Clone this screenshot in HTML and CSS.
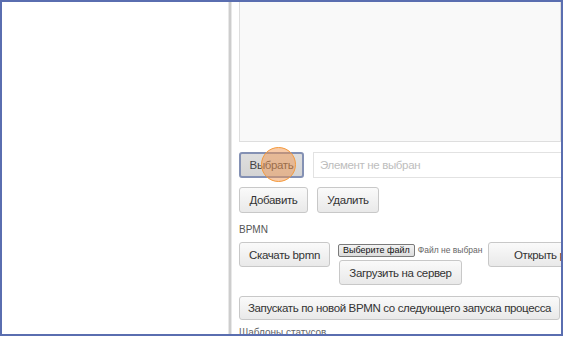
FILE: index.html
```html
<!DOCTYPE html>
<html lang="ru">
<head>
<meta charset="utf-8">
<link rel="stylesheet" href="styles.css">
</head>
<body>
<div class="frame">
  <div class="sidebar"></div>
  <div class="divider"></div>
  <div class="content">
    <div class="textarea"></div>
    <div class="row row-select">
      <button class="btn btn-active">Выбрать</button>
      <div class="field">Элемент не выбран</div>
    </div>
    <div class="row row-add">
      <button class="btn btn-add">Добавить</button>
      <button class="btn btn-del">Удалить</button>
    </div>
    <div class="label">BPMN</div>
    <div class="row row-bpmn">
      <button class="btn btn-download">Скачать bpmn</button>
      <div class="upload">
        <div class="file-line">
          <span class="file-btn">Выберите файл</span>
          <span class="file-name">Файл не выбран</span>
        </div>
        <button class="btn btn-upload">Загрузить на сервер</button>
      </div>
      <button class="btn btn-open">Открыть редактор</button>
    </div>
    <div class="row row-run">
      <button class="btn btn-run">Запускать по новой BPMN со следующего запуска процесса</button>
    </div>
    <div class="label label-cut">Шаблоны статусов</div>
  </div>
  <div class="click-marker"></div>
</div>
</body>
</html>
```

FILE: styles.css
```css
html, body {
  margin: 0;
  padding: 0;
  background: #ffffff;
}
body {
  width: 564px;
  height: 337px;
  overflow: hidden;
  font-family: "Liberation Sans", Arial, sans-serif;
}
.frame {
  position: relative;
  box-sizing: border-box;
  width: 563px;
  height: 336px;
  border: 2px solid #5a6eb0;
  display: flex;
  overflow: hidden;
  background: #fff;
}
.sidebar {
  width: 226px;
  flex: none;
  background: #fff;
}
.divider {
  box-sizing: border-box;
  width: 4px;
  flex: none;
  background: #cdcdcd;
  border-left: 1px solid #e8e8e8;
  border-right: 1px solid #e8e8e8;
}
.content {
  flex: 1;
  padding-left: 7px;
  min-width: 0;
  overflow: hidden;
  display: flex;
  flex-direction: column;
  align-items: flex-start;
}
.textarea {
  box-sizing: border-box;
  width: 322px;
  height: 140px;
  flex: none;
  background: #f9f9f9;
  border: 1px solid #dedede;
  border-top: none;
}
.row {
  display: flex;
  flex: none;
  align-items: flex-start;
  white-space: nowrap;
}
.btn {
  box-sizing: border-box;
  flex: none;
  font-family: "Liberation Sans", Arial, sans-serif;
  font-size: 11.5px;
  letter-spacing: -0.35px;
  color: #333;
  background: linear-gradient(#fafafa, #e9e9e9);
  border: 1px solid #c8c8c8;
  border-radius: 3px;
  padding: 0;
  margin: 0;
  text-align: center;
}
.row-select {
  margin-top: 10px;
  gap: 9px;
  width: 340px;
}
.btn-active {
  width: 65px;
  height: 26px;
  background: linear-gradient(#dedede, #d4d4d4);
  border: 2px solid #8491b4;
  color: #444;
}
.field {
  box-sizing: border-box;
  height: 26px;
  flex: 1;
  border: 1px solid #e2e2e2;
  background: #fff;
  color: #bdbdbd;
  font-size: 11.5px;
  letter-spacing: -0.35px;
  line-height: 24px;
  padding-left: 6px;
}
.row-add {
  margin-top: 9px;
  gap: 9px;
}
.btn-add {
  width: 69px;
  height: 26px;
}
.btn-del {
  width: 62px;
  height: 26px;
}
.label {
  flex: none;
  font-size: 10px;
  color: #555;
  margin-top: 11px;
  height: 12px;
  line-height: 12px;
}
.row-bpmn {
  margin-top: 6px;
  gap: 8px;
}
.btn-download {
  width: 91px;
  height: 25px;
}
.upload {
  display: flex;
  flex-direction: column;
  align-items: flex-start;
  padding-top: 2px;
  gap: 4px;
  width: 150px;
}
.file-line {
  display: flex;
  align-items: center;
  gap: 3px;
  height: 12px;
}
.file-btn {
  box-sizing: border-box;
  height: 13px;
  line-height: 11px;
  font-size: 9px;
  color: #111;
  background: linear-gradient(#f3f3f3, #dcdcdc);
  border: 1px solid #7a7a7a;
  border-radius: 2px;
  padding: 0 4px;
}
.file-name {
  font-size: 8.5px;
  color: #666;
}
.btn-upload {
  width: 123px;
  height: 25px;
  margin-left: 1px;
}
.btn-open {
  width: 110px;
  height: 25px;
  margin-left: -8px;
  text-align: left;
  padding-left: 25px;
}
.row-run {
  margin-top: 11px;
}
.btn-run {
  width: 321px;
  height: 24px;
}
.label-cut {
  margin-top: 7px;
  color: #666;
}
.click-marker {
  position: absolute;
  left: 259px;
  top: 145px;
  width: 33px;
  height: 33px;
  border-radius: 50%;
  border: 1.5px solid #f59a3c;
  background: rgba(240, 150, 80, 0.5);
}
```
